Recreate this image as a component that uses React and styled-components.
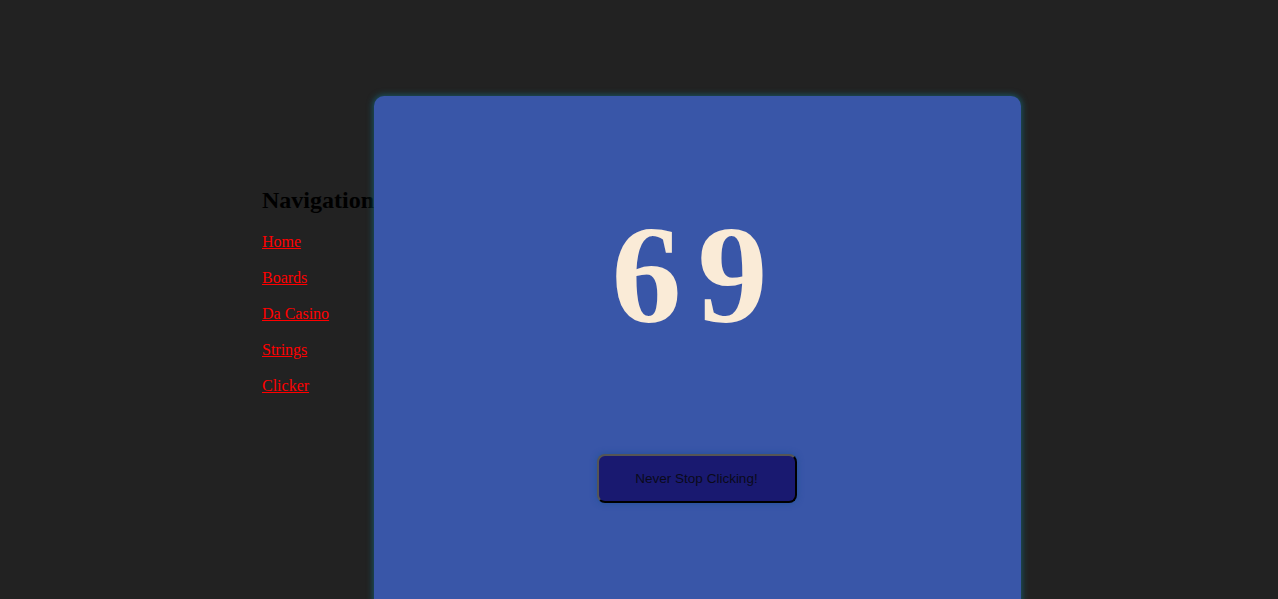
import React, { useState } from 'react'
import styled, { createGlobalStyle } from 'styled-components'

const GlobalStyle = createGlobalStyle`
  body {
    margin: 0;
    background-color: #222222;
    font-family: "Liberation Serif", "Times New Roman", serif;
  }
`;

const links = ['Home', 'Boards', 'Da Casino', 'Strings', 'Clicker']

const App = () => {
  const [count, setCount] = useState(69)

  return (
    <>
      <GlobalStyle />
      <Page>
        <Sidebar>
          <NavTitle>Navigation</NavTitle>
          <NavList>
            {links.map((l) => (
              <NavLink key={l} href="#">{l}</NavLink>
            ))}
          </NavList>
        </Sidebar>
        <Card>
          <Counter>{count}</Counter>
          <ClickButton onClick={() => setCount(count + 1)}>Never Stop Clicking!</ClickButton>
        </Card>
      </Page>
    </>
  )
}

const Page = styled.div`
  display: flex;
  align-items: flex-start;
  padding: 96px 0 0 262px;
  height: 599px;
  box-sizing: border-box;
  overflow: hidden;
`;

const Sidebar = styled.nav`
  width: 112px;
  flex-shrink: 0;
  padding-top: 91px;
  white-space: nowrap;
`;

const NavTitle = styled.h2`
  font-size: 24px;
  font-weight: bold;
  color: #000;
  margin: 0 0 19px 0;
`;

const NavList = styled.div`
  display: flex;
  flex-direction: column;
  align-items: flex-start;
  gap: 18px;
`;

const NavLink = styled.a`
  font-size: 16px;
  color: red;
  text-decoration: underline;
`;

const Card = styled.div`
  position: relative;
  width: 647px;
  height: 540px;
  flex-shrink: 0;
  background-color: #3956a8;
  border-radius: 10px;
  box-shadow: 0 0 6px 1px rgba(20, 110, 130, 0.7);
  display: flex;
  flex-direction: column;
  align-items: center;
`;

const Counter = styled.div`
  font-family: "Liberation Serif", "Times New Roman", serif;
  font-weight: bold;
  font-size: 140px;
  letter-spacing: 16px;
  color: antiquewhite;
  margin-top: 98px;
  line-height: 161px;
`;

const ClickButton = styled.button`
  margin-top: 99px;
  width: 200px;
  height: 49px;
  margin-left: -2px;
  background-color: midnightblue;
  color: #0a0a1a;
  font-family: "Liberation Sans", Arial, sans-serif;
  font-size: 13.5px;
  border: 2px solid #555;
  border-right-color: #000;
  border-bottom-color: #000;
  border-radius: 8px;
  box-shadow: 0 0 6px rgba(30, 80, 150, 0.9);
  cursor: pointer;
`;

export default App
